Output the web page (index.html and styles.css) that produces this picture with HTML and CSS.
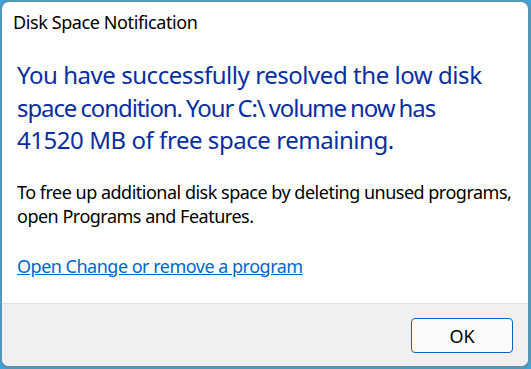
FILE: index.html
```html
<!DOCTYPE html>
<html lang="en">
<head>
<meta charset="utf-8">
<title>Disk Space Notification</title>
<link rel="stylesheet" href="styles.css">
</head>
<body>
<div class="frame">
  <div class="window">
    <div class="content">
      <div class="title">Disk Space Notification</div>
      <div class="main">You have successfully resolved the low disk<br><span class="tight">space condition. Your C:\ volume now has</span><br>41520 MB of free space remaining.</div>
      <div class="body">To free up additional disk space by deleting unused programs,<br>open Programs and Features.</div>
      <a class="link" href="#">Open Change or remove a program</a>
    </div>
    <div class="footer">
      <button class="btn">OK</button>
    </div>
  </div>
</div>
</body>
</html>
```
FILE: styles.css
```css
html, body {
  margin: 0;
  padding: 0;
  width: 531px;
  height: 369px;
  overflow: hidden;
  background: #3ea4dc;
}
.frame {
  box-sizing: border-box;
  width: 531px;
  height: 369px;
  padding: 2px 3px 3px 2px;
  background: #5696b8;
  border-radius: 9px;
  display: flex;
}
.window {
  flex: 1;
  display: flex;
  flex-direction: column;
  background: #ffffff;
  border-radius: 7px;
  overflow: hidden;
  font-family: "Noto Sans", "Open Sans", sans-serif;
}
.content {
  flex: 1;
  display: flex;
  flex-direction: column;
  align-items: flex-start;
  padding: 8px 0 0 15px;
}
.title {
  font-size: 18px;
  line-height: 24px;
  color: #000;
  margin-left: -4px;
  letter-spacing: -0.4px;
}
.main {
  margin-top: 25px;
  font-size: 24px;
  line-height: 32.5px;
  color: #0a2ea0;
  letter-spacing: -0.45px;
  white-space: nowrap;
}
.tight {
  letter-spacing: -1.1px;
  word-spacing: -1px;
}
.body {
  margin-top: 23px;
  font-size: 18px;
  line-height: 24px;
  color: #000;
  letter-spacing: -0.5px;
  white-space: nowrap;
}
.link {
  margin-top: 26px;
  font-size: 18px;
  line-height: 24px;
  color: #0066cc;
  text-decoration: underline;
  letter-spacing: -0.5px;
}
.footer {
  height: 63px;
  box-sizing: border-box;
  border-top: 1px solid #dfdfdf;
  background: #f0f0f0;
  display: flex;
  justify-content: flex-end;
  align-items: flex-start;
  padding: 14px 15px 0 0;
}
.btn {
  width: 102px;
  height: 35px;
  border: 1px solid #0067c0;
  border-radius: 4px;
  background: #fbfbfb;
  font-family: "Noto Sans", "Open Sans", sans-serif;
  font-size: 18px;
  color: #000;
  padding: 0;
}
```
